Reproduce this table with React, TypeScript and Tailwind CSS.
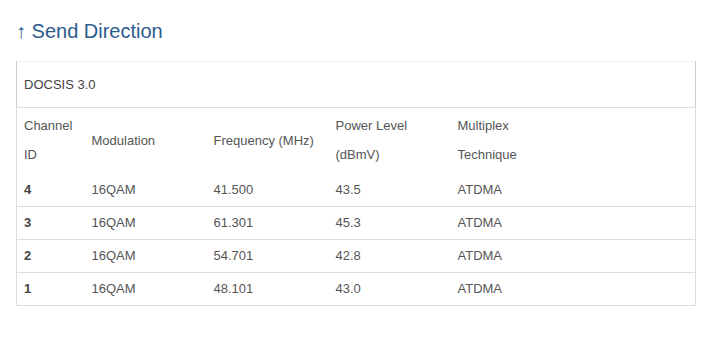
const rows = [
  { id: "4", mod: "16QAM", freq: "41.500", power: "43.5", tech: "ATDMA" },
  { id: "3", mod: "16QAM", freq: "61.301", power: "45.3", tech: "ATDMA" },
  { id: "2", mod: "16QAM", freq: "54.701", power: "42.8", tech: "ATDMA" },
  { id: "1", mod: "16QAM", freq: "48.101", power: "43.0", tech: "ATDMA" },
];

const th = "pl-[7px] pr-2 pt-[3px] pb-[5px] text-left align-middle font-normal leading-[29px]";
const td = "pl-[7px] pr-2 py-[2px] leading-[28px]";

export default function App() {
  return (
    <div
      className="min-h-screen bg-white px-4 pt-[18px] text-[13px] text-[#555]"
      style={{ fontFamily: '"Liberation Sans", Arial, sans-serif' }}
    >
      <h2 className="text-[20px] leading-[26px] text-[#2d5b8e]">↑ Send Direction</h2>

      <div className="mt-[17px] w-[680px]">
        <div className="flex h-[46px] items-center border-x border-t border-x-[#ccc] border-t-[#f0f0f0] pl-[7px] text-[#444]">
          DOCSIS 3.0
        </div>
        <table className="w-full table-fixed border-collapse border border-[#ddd]">
          <colgroup>
            <col className="w-[68px]" />
            <col className="w-[122px]" />
            <col className="w-[122px]" />
            <col className="w-[122px]" />
            <col />
          </colgroup>
          <thead>
            <tr>
              <th className={th}>
                Channel
                <br />
                ID
              </th>
              <th className={th}>Modulation</th>
              <th className={th}>Frequency (MHz)</th>
              <th className={th}>
                Power Level
                <br />
                (dBmV)
              </th>
              <th className={th}>
                Multiplex
                <br />
                Technique
              </th>
            </tr>
          </thead>
          <tbody>
            {rows.map((r, i) => (
              <tr key={r.id} className={i > 0 ? "border-t border-[#ddd]" : ""}>
                <td className={`${td} font-bold text-[#444]`}>{r.id}</td>
                <td className={td}>{r.mod}</td>
                <td className={td}>{r.freq}</td>
                <td className={td}>{r.power}</td>
                <td className={td}>{r.tech}</td>
              </tr>
            ))}
          </tbody>
        </table>
      </div>
    </div>
  );
}
